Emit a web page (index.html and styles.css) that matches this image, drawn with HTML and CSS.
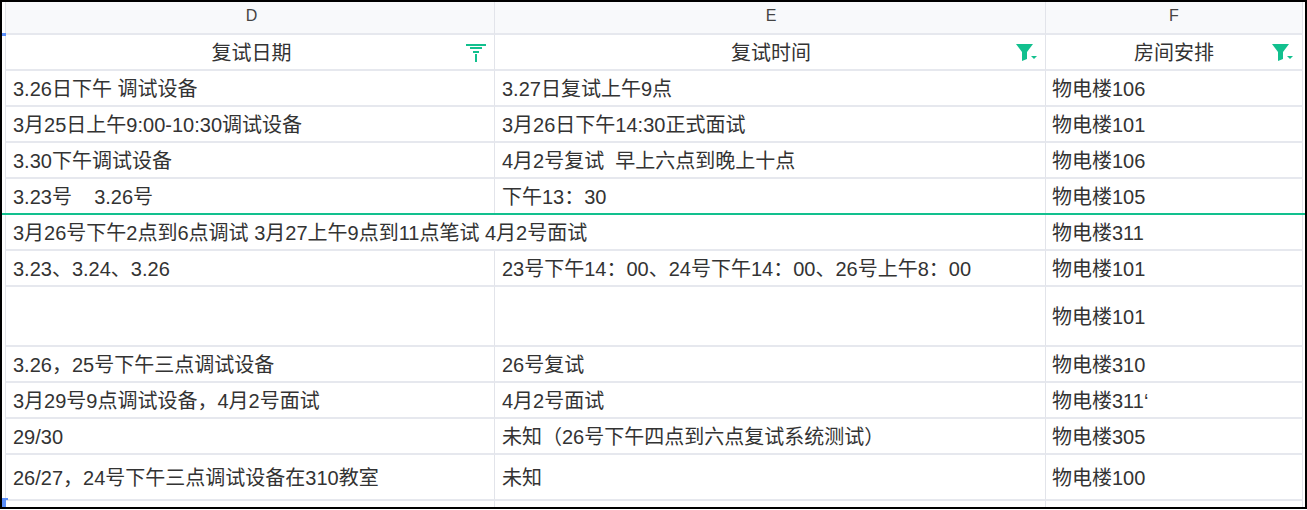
FILE: index.html
```html
<!DOCTYPE html>
<html lang="zh-CN">
<head>
<meta charset="utf-8">
<title>复试安排</title>
<link rel="stylesheet" href="styles.css">
</head>
<body>
<div class="frame">
  <div class="sheet">
    <div class="cell col-head first">D</div>
    <div class="cell col-head mid">E</div>
    <div class="cell col-head">F</div>

    <div class="cell title first">复试日期<svg class="filter-icon" width="20" height="18" viewBox="0 0 20 18"><path fill="#12c08e" d="M0 0h20v2H0zM4 3h12v2H4zM7 7h6v2H7zM9 10h2v8H9z"/></svg></div>
    <div class="cell title mid">复试时间<svg class="filter-icon" width="21" height="18" viewBox="0 0 21 18"><path fill="#12c08e" d="M0 0h17l-6 8v7l-5 2V8z"/><path fill="#12c08e" d="M15 12h6l-3 3z"/></svg></div>
    <div class="cell title last">房间安排<svg class="filter-icon" width="21" height="18" viewBox="0 0 21 18"><path fill="#12c08e" d="M0 0h17l-6 8v7l-5 2V8z"/><path fill="#12c08e" d="M15 12h6l-3 3z"/></svg></div>

    <div class="cell">3.26日下午 调试设备</div>
    <div class="cell">3.27日复试上午9点</div>
    <div class="cell room">物电楼106</div>

    <div class="cell">3月25日上午9:00-10:30调试设备</div>
    <div class="cell">3月26日下午14:30正式面试</div>
    <div class="cell room">物电楼101</div>

    <div class="cell">3.30下午调试设备</div>
    <div class="cell">4月2号复试&nbsp; 早上六点到晚上十点</div>
    <div class="cell room">物电楼106</div>

    <div class="cell">3.23号&nbsp;&nbsp;&nbsp; 3.26号</div>
    <div class="cell">下午13：30</div>
    <div class="cell room">物电楼105</div>

    <div class="cell wide">3月26号下午2点到6点调试 3月27上午9点到11点笔试 4月2号面试</div>
    <div class="cell room">物电楼311</div>

    <div class="cell">3.23、3.24、3.26</div>
    <div class="cell">23号下午14：00、24号下午14：00、26号上午8：00</div>
    <div class="cell room">物电楼101</div>

    <div class="cell"></div>
    <div class="cell"></div>
    <div class="cell room">物电楼101</div>

    <div class="cell">3.26，25号下午三点调试设备</div>
    <div class="cell">26号复试</div>
    <div class="cell room">物电楼310</div>

    <div class="cell">3月29号9点调试设备，4月2号面试</div>
    <div class="cell">4月2号面试</div>
    <div class="cell room">物电楼311‘</div>

    <div class="cell">29/30</div>
    <div class="cell">未知（26号下午四点到六点复试系统测试）</div>
    <div class="cell room">物电楼305</div>

    <div class="cell">26/27，24号下午三点调试设备在310教室</div>
    <div class="cell">未知</div>
    <div class="cell room">物电楼100</div>

    <div class="cell"></div>
    <div class="cell"></div>
    <div class="cell room"></div>
  </div>
  <span class="green-line"></span>
  <span class="mark mark-top"></span>
  <span class="mark mark-bottom"></span>
</div>
</body>
</html>
```
FILE: styles.css
```css
* { box-sizing: border-box; }
html, body { margin: 0; padding: 0; background: #fff; }
body { width: 1307px; height: 510px; overflow: hidden; }
.frame {
  position: relative;
  width: 1307px;
  height: 509px;
  border: 2px solid #000;
  padding-left: 3px;
  overflow: hidden;
  font-family: "Liberation Sans", "Noto Sans CJK SC", sans-serif;
  font-size: 20px;
  color: #333;
}
.sheet {
  display: grid;
  width: 1298px;
  border-left: 1px solid #e3e5ea;
  grid-template-columns: 489px 551px 257px;
  grid-template-rows: 33px 36px 36px 36px 36px 36px 36px 36px 60px 36px 36px 36px 46px 20px;
}
.cell {
  display: flex;
  align-items: center;
  padding: 2px 0 0 7px;
  border-right: 1px solid #e2e4ea;
  border-bottom: 2px solid #e6e8ee;
  white-space: nowrap;
  overflow: hidden;
  line-height: 24px;
}
.room { padding-left: 6px; }
.col-head {
  justify-content: center;
  padding: 0 0 4px;
  background: #f8f9fb;
  font-size: 16px;
  color: #444;
}
.title {
  position: relative;
  justify-content: center;
  padding: 2px 0 0;
  color: #333;
}
.first { padding-left: 3px; }
.mid { padding-left: 2px; }
.filter-icon {
  position: absolute;
  right: 8px;
  top: 9px;
}
.last .filter-icon { right: 9px; }
.wide { grid-column: span 2; }
.green-line {
  position: absolute;
  left: 0;
  right: 0;
  top: 211px;
  height: 2px;
  background: #12c08e;
}
.mark { position: absolute; left: 0; background: #5b8ff9; }
.mark-top { top: 31px; width: 4px; height: 3px; }
.mark-bottom { top: 496px; width: 4px; height: 9px; }
.mark-bottom::after {
  content: "";
  position: absolute;
  left: 0;
  top: 0;
  width: 6px;
  height: 2px;
  background: #5b8ff9;
}
```
